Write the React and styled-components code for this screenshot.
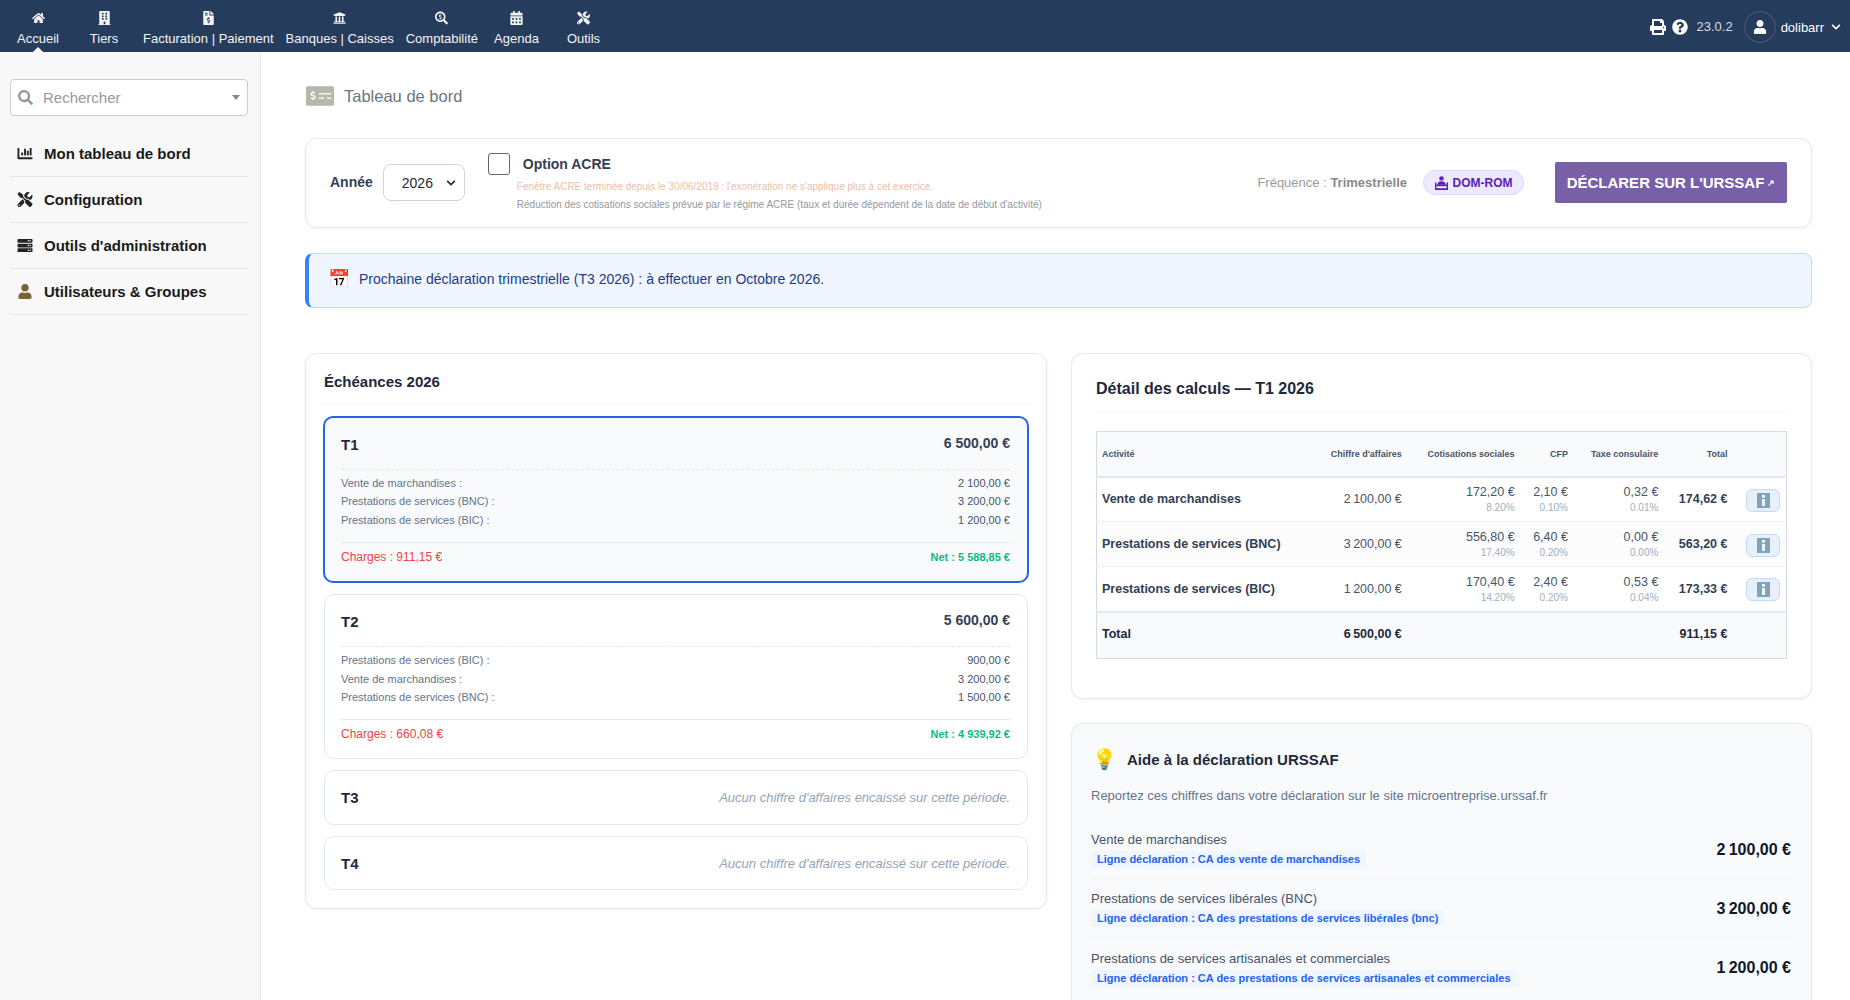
import React from "react";
import styled, { createGlobalStyle } from "styled-components";
import {
  FaHome, FaBuilding, FaFileInvoiceDollar, FaUniversity, FaSearchDollar, FaCalendarAlt, FaTools,
  FaChartBar, FaServer, FaUser, FaPrint, FaQuestionCircle, FaSearch, FaMoneyCheckAlt, FaChevronDown,
} from "react-icons/fa";

const Global = createGlobalStyle`
  html, body { margin: 0; padding: 0; height: 1000px; overflow: hidden; background: #fff; }
  body { font-family: "Liberation Sans", Arial, sans-serif; color: #1e293b; }
  * { box-sizing: border-box; }
`;

const TopBar = styled.header`
  height: 52px;
  background: #263c5c;
  color: #fff;
  display: flex;
  align-items: stretch;
  justify-content: space-between;
  padding: 0 9px 0 5px;
`;
const NavList = styled.nav`
  display: flex;
`;
const NavItem = styled.div`
  position: relative;
  display: flex;
  flex-direction: column;
  align-items: center;
  padding: 11px 6px 0;
  min-width: ${(p) => p.$min || 0}px;
  font-size: 13px;
  color: #f4f4f4;
  svg { font-size: 13px; height: 14px; margin-bottom: 6px; }
  ${(p) => p.$active && `
    &::after {
      content: "";
      position: absolute;
      left: 50%;
      bottom: 0;
      margin-left: -5px;
      border: 5px solid transparent;
      border-top: 0;
      border-bottom-color: #fff;
    }
  `}
`;
const TopRight = styled.div`
  display: flex;
  align-items: center;
  font-size: 13px;
  padding-top: 2px;
`;
const Version = styled.span`
  font-size: 13px;
  color: #d6dce5;
  margin: 0 11px 2px 8px;
`;
const Avatar = styled.span`
  width: 32px;
  height: 32px;
  border-radius: 50%;
  border: 1px solid #4a5d78;
  display: inline-flex;
  align-items: center;
  justify-content: center;
  font-size: 14px;
  margin-right: 5px;
`;

const Body = styled.div`
  display: flex;
  height: 948px;
  overflow: hidden;
`;
const Side = styled.aside`
  width: 261px;
  flex: none;
  background: #f8f8f8;
  border-right: 1px solid #eaeaea;
  padding: 27px 12px 0 10px;
`;
const SearchBox = styled.div`
  height: 37px;
  border: 1px solid #ccc;
  border-radius: 4px;
  background: #fff;
  display: flex;
  align-items: center;
  padding: 0 6px 0 7px;
  font-size: 15px;
  color: #999;
  margin-bottom: 15px;
  svg { color: #999; font-size: 15px; margin-right: 10px; }
  span { flex: 1; }
  &::after {
    content: "";
    border: 4px solid transparent;
    border-top: 5px solid #888;
    border-bottom: 0;
    margin-right: 1px;
  }
`;
const SideItem = styled.div`
  height: 46px;
  border-bottom: 1px solid #e6e6e6;
  display: flex;
  align-items: center;
  font-weight: 700;
  font-size: 15px;
  color: #1a1a1a;
  svg { width: 16px; margin: 0 11px 0 7px; color: ${(p) => p.$color || "#222"}; font-size: 15px; }
`;

const Main = styled.main`
  flex: 1;
  padding: 26px 38px 0 44px;
  min-width: 0;
`;
const PageTitle = styled.div`
  display: flex;
  align-items: center;
  height: 36px;
  padding-left: 1px;
  font-size: 16.5px;
  color: #6c757d;
  margin-bottom: 24px;
  svg { font-size: 28px; color: #b5b8aa; margin-right: 10px; }
`;
const Panel = styled.section`
  background: ${(p) => p.$bg || "#fff"};
  border: 1px solid #e4e9f2;
  border-radius: 12px;
  box-shadow: 0 1px 3px rgba(15, 23, 42, 0.06);
`;
const Toolbar = styled(Panel)`
  height: 90px;
  display: flex;
  align-items: center;
  padding: 0 24px 1px;
  margin-bottom: 25px;
`;
const YearLabel = styled.label`
  font-weight: 700;
  font-size: 14px;
  color: #334155;
  margin-right: 10px;
  margin-bottom: 2px;
`;
const YearSelect = styled.div`
  width: 82px;
  height: 37px;
  border: 1px solid #cbd5e1;
  border-radius: 8px;
  font-size: 14px;
  display: flex;
  align-items: center;
  justify-content: space-between;
  padding: 0 8px 0 18px;
  svg { font-size: 10px; }
`;
const Acre = styled.div`
  margin-left: 23px;
  align-self: flex-start;
  padding-top: 14px;
`;
const AcreHead = styled.div`
  display: flex;
  align-items: center;
  font-size: 14px;
  font-weight: 700;
  color: #334155;
  margin-bottom: 3px;
`;
const CheckBox = styled.span`
  width: 22px;
  height: 22px;
  border: 1px solid #666;
  border-radius: 3px;
  margin-right: 13px;
`;
const AcreNote = styled.div`
  font-size: 10px;
  color: ${(p) => p.$color};
  margin-left: 29px;
  line-height: 18px;
`;
const Freq = styled.div`
  margin-left: auto;
  margin-bottom: 1px;
  font-size: 13px;
  color: #9b9b9b;
  b { color: #8a8a8a; }
`;
const Badge = styled.span`
  display: inline-flex;
  align-items: center;
  gap: 5px;
  width: 101px;
  height: 25px;
  justify-content: center;
  margin: 0 31px 0 16px;
  background: #ede9fe;
  border: 1px solid #ddd6fe;
  border-radius: 13px;
  color: #5b21b6;
  font-size: 12px;
  font-weight: 700;
`;
const DeclareBtn = styled.div`
  width: 232px;
  height: 41px;
  background: #7860a8;
  border-radius: 2px;
  color: #fff;
  font-weight: 700;
  font-size: 15px;
  display: flex;
  align-items: center;
  justify-content: center;
  white-space: nowrap;
  small { font-size: 9px; margin-left: 3px; }
`;
const Notice = styled.div`
  height: 55px;
  background: #eff6ff;
  border: 1px solid #bfdbfe;
  border-left: 4px solid #3b82f6;
  border-radius: 8px;
  display: flex;
  align-items: center;
  padding: 0 0 3px 19px;
  font-size: 14px;
  color: #1e3a8a;
  margin-bottom: 45px;
  span:first-child { font-size: 18px; margin-right: 9px; }
`;
const Columns = styled.div`
  display: flex;
  gap: 24px;
  align-items: flex-start;
`;
const LeftCol = styled.div`
  width: 742px;
  flex: none;
`;
const RightCol = styled.div`
  flex: 1;
  min-width: 0;
`;
const EchPanel = styled(Panel)`
  padding: 19px 18px 18px;
`;
const EchTitle = styled.h3`
  margin: 0;
  padding-bottom: 14px;
  border-bottom: 1px solid #f1f5f9;
  font-size: 15px;
  color: #1e293b;
`;
const Quarter = styled.div`
  border: ${(p) => (p.$active ? "2px solid #2563eb" : "1px solid #e2e8f0")};
  background: ${(p) => (p.$active ? "#f8fafc" : "#fff")};
  border-radius: 10px;
  padding: ${(p) => (p.$empty ? "16px 17px 15.5px 16px" : "16px 17px 16px 16px")};
  margin: ${(p) => (p.$active ? "11px -1px 0" : "11px 0 0")};
`;
const QHead = styled.div`
  display: flex;
  justify-content: space-between;
  align-items: center;
  height: 21px;
`;
const QName = styled.div`
  font-weight: 700;
  font-size: 15px;
  line-height: 20px;
  margin-top: 1px;
`;
const QTotal = styled.div`
  font-weight: 700;
  font-size: 14px;
  color: #334155;
  margin-bottom: 3px;
`;
const QEmpty = styled.div`
  font-style: italic;
  font-size: 13px;
  color: #94a3b8;
`;
const QLines = styled.div`
  border-top: 1px dashed #e2e8f0;
  margin-top: 14px;
  padding: 4px 0 13px;
`;
const QLine = styled.div`
  display: flex;
  justify-content: space-between;
  font-size: 11px;
  line-height: 18.4px;
  color: #64748b;
  span:last-child { color: #475569; }
`;
const QFoot = styled.div`
  border-top: 1px solid #e2e8f0;
  padding-top: 6px;
  display: flex;
  justify-content: space-between;
  align-items: center;
  height: 16px;
  box-sizing: content-box;
`;
const Charges = styled.span`
  font-size: 12px;
  color: #ef4444;
`;
const Net = styled.span`
  font-size: 11px;
  font-weight: 700;
  color: #10b981;
`;

const DetailPanel = styled(Panel)`
  padding: 26px 24px 39px 24px;
  margin-bottom: 24px;
`;
const DetailTitle = styled.h3`
  margin: 0 0 18px;
  padding-bottom: 14px;
  border-bottom: 1px solid #f1f5f9;
  font-size: 16px;
  color: #1e293b;
`;
const Table = styled.table`
  width: 100%;
  border-collapse: collapse;
  border: 1px solid #d5d9e0;
  font-size: 12.5px;
  td, th { padding: 0 6px; text-align: right; }
  td:first-child, th:first-child { text-align: left; padding-left: 5px; }
`;
const HeadRow = styled.tr`
  height: 45px;
  background: #f8fafc;
  border-bottom: 2px solid #e2e8f0;
  th { font-size: 9px; color: #475569; font-weight: 700; }
`;
const Row = styled.tr`
  height: 45px;
  border-bottom: 1px solid #eef1f5;
  background: ${(p) => (p.$alt ? "#fcfcfd" : "#fff")};
  color: #475569;
  td:first-child { font-weight: 700; color: #334155; }
`;
const TotalCell = styled.td`
  font-weight: 700;
  color: #334155;
`;
const FootRow = styled.tr`
  height: 47px;
  background: #f8fafc;
  border-top: 2px solid #e2e8f0;
  td { font-weight: 700; color: #1e293b; padding-bottom: 2px; }
`;
const Pct = styled.div`
  font-size: 10px;
  color: #a0aec0;
  margin-top: 3px;
`;
const InfoBtn = styled.span`
  display: inline-flex;
  align-items: center;
  justify-content: center;
  width: 34px;
  height: 23px;
  margin-top: 2px;
  background: #e8f1fb;
  border: 1px solid #bfdbfe;
  border-radius: 6px;
`;

const HelpPanel = styled(Panel)`
  padding: 18px 20px 0 19px;
  height: 300px;
`;
const HelpHead = styled.div`
  display: flex;
  align-items: center;
  font-weight: 700;
  font-size: 15px;
  color: #1e293b;
  height: 34px;
  span { font-size: 20px; margin: 0 10px 0 1px; }
`;
const HelpText = styled.p`
  margin: 12px 0 18px;
  font-size: 13px;
  color: #64748b;
`;
const HelpRow = styled.div`
  display: flex;
  align-items: center;
  justify-content: space-between;
  height: 59px;
  border-bottom: 1px solid #f1f5f9;
  &:last-child { border-bottom: 0; }
`;
const HelpLabel = styled.div`
  font-size: 13px;
  color: #475569;
  margin-bottom: 2px;
`;
const HelpTag = styled.span`
  display: inline-block;
  background: #eff6ff;
  color: #2563eb;
  font-weight: 700;
  font-size: 11px;
  padding: 2px 6px 3px;
  border-radius: 3px;
`;
const HelpAmount = styled.div`
  font-weight: 700;
  font-size: 16px;
  color: #0f172a;
  margin-bottom: 1px;
`;

function TrayIcon() {
  return (
    <svg width="13" height="14" viewBox="0 0 13 14" fill="currentColor" aria-hidden="true">
      <circle cx="6.5" cy="2.4" r="2.2" />
      <path d="M2.5 8.2c0-2 1.8-3 4-3s4 1 4 3H2.5z" />
      <path d="M0 6.5h1.4v5.8h10.2V6.5H13V14H0z" />
      <rect x="1.4" y="8.2" width="10.2" height="2" />
    </svg>
  );
}

function InfoIcon() {
  return (
    <svg width="13" height="15" viewBox="0 0 13 15" aria-hidden="true">
      <rect width="13" height="15" fill="#7ea5b8" />
      <rect x="5" y="2" width="3" height="2.6" fill="#fff" />
      <rect x="5" y="6" width="3" height="7" fill="#eef5f8" />
    </svg>
  );
}

const nav = [
  ["Accueil", FaHome, 66, true],
  ["Tiers", FaBuilding, 66],
  ["Facturation | Paiement", FaFileInvoiceDollar],
  ["Banques | Caisses", FaUniversity],
  ["Comptabilité", FaSearchDollar],
  ["Agenda", FaCalendarAlt, 65],
  ["Outils", FaTools, 69],
];
const side = [
  ["Mon tableau de bord", FaChartBar],
  ["Configuration", FaTools],
  ["Outils d'administration", FaServer],
  ["Utilisateurs & Groupes", FaUser, "#7a6233"],
];
const details = [
  ["Vente de marchandises", "2\u202f100,00 €", "172,20 €", "8.20%", "2,10 €", "0.10%", "0,32 €", "0.01%", "174,62 €"],
  ["Prestations de services (BNC)", "3\u202f200,00 €", "556,80 €", "17.40%", "6,40 €", "0.20%", "0,00 €", "0.00%", "563,20 €"],
  ["Prestations de services (BIC)", "1\u202f200,00 €", "170,40 €", "14.20%", "2,40 €", "0.20%", "0,53 €", "0.04%", "173,33 €"],
];
const help = [
  ["Vente de marchandises", "CA des vente de marchandises", "2\u202f100,00 €"],
  ["Prestations de services libérales (BNC)", "CA des prestations de services libérales (bnc)", "3\u202f200,00 €"],
  ["Prestations de services artisanales et commerciales", "CA des prestations de services artisanales et commerciales", "1\u202f200,00 €"],
];

function QuarterCard({ name, total, lines, charges, net, active }) {
  return (
    <Quarter $active={active}>
      <QHead>
        <QName>{name}</QName>
        <QTotal>{total}</QTotal>
      </QHead>
      <QLines>
        {lines.map(([l, v]) => (
          <QLine key={l}><span>{l} :</span><span>{v}</span></QLine>
        ))}
      </QLines>
      <QFoot>
        <Charges>Charges : {charges}</Charges>
        <Net>Net : {net}</Net>
      </QFoot>
    </Quarter>
  );
}

export default function App() {
  return (
    <>
      <Global />
      <TopBar>
        <NavList>
          {nav.map(([label, Icon, min, active]) => (
            <NavItem key={label} $min={min} $active={active}><Icon />{label}</NavItem>
          ))}
        </NavList>
        <TopRight>
          <FaPrint size={16} style={{ marginRight: 6 }} />
          <FaQuestionCircle size={16} />
          <Version>23.0.2</Version>
          <Avatar><FaUser /></Avatar>
          dolibarr
          <FaChevronDown size={10} style={{ marginLeft: 7 }} />
        </TopRight>
      </TopBar>
      <Body>
        <Side>
          <SearchBox><FaSearch /><span>Rechercher</span></SearchBox>
          {side.map(([label, Icon, color]) => (
            <SideItem key={label} $color={color}><Icon />{label}</SideItem>
          ))}
        </Side>
        <Main>
          <PageTitle><FaMoneyCheckAlt />Tableau de bord</PageTitle>
          <Toolbar>
            <YearLabel>Année</YearLabel>
            <YearSelect>2026<FaChevronDown /></YearSelect>
            <Acre>
              <AcreHead><CheckBox />Option ACRE</AcreHead>
              <AcreNote $color="#eabfa6">Fenêtre ACRE terminée depuis le 30/06/2019 : l'exonération ne s'applique plus à cet exercice.</AcreNote>
              <AcreNote $color="#94989e">Réduction des cotisations sociales prévue par le régime ACRE (taux et durée dépendent de la date de début d'activité)</AcreNote>
            </Acre>
            <Freq>Fréquence : <b>Trimestrielle</b></Freq>
            <Badge><TrayIcon />DOM-ROM</Badge>
            <DeclareBtn>DÉCLARER SUR L'URSSAF<small>↗</small></DeclareBtn>
          </Toolbar>
          <Notice><span>📅</span><span>Prochaine déclaration trimestrielle (T3 2026) : à effectuer en Octobre 2026.</span></Notice>
          <Columns>
            <LeftCol>
              <EchPanel>
                <EchTitle>Échéances 2026</EchTitle>
                <QuarterCard
                  active
                  name="T1"
                  total="6 500,00 €"
                  lines={[["Vente de marchandises", "2 100,00 €"], ["Prestations de services (BNC)", "3 200,00 €"], ["Prestations de services (BIC)", "1 200,00 €"]]}
                  charges="911,15 €"
                  net="5 588,85 €"
                />
                <QuarterCard
                  name="T2"
                  total="5 600,00 €"
                  lines={[["Prestations de services (BIC)", "900,00 €"], ["Vente de marchandises", "3 200,00 €"], ["Prestations de services (BNC)", "1 500,00 €"]]}
                  charges="660,08 €"
                  net="4 939,92 €"
                />
                <Quarter $empty>
                  <QHead><QName>T3</QName><QEmpty>Aucun chiffre d'affaires encaissé sur cette période.</QEmpty></QHead>
                </Quarter>
                <Quarter $empty>
                  <QHead><QName>T4</QName><QEmpty>Aucun chiffre d'affaires encaissé sur cette période.</QEmpty></QHead>
                </Quarter>
              </EchPanel>
            </LeftCol>
            <RightCol>
              <DetailPanel>
                <DetailTitle>Détail des calculs — T1 2026</DetailTitle>
                <Table>
                  <thead>
                    <HeadRow>
                      <th>Activité</th><th>Chiffre d'affaires</th><th>Cotisations sociales</th><th>CFP</th><th>Taxe consulaire</th><th>Total</th><th />
                    </HeadRow>
                  </thead>
                  <tbody>
                    {details.map((d, i) => (
                      <Row key={d[0]} $alt={i === 1}>
                        <td>{d[0]}</td>
                        <td>{d[1]}</td>
                        <td>{d[2]}<Pct>{d[3]}</Pct></td>
                        <td>{d[4]}<Pct>{d[5]}</Pct></td>
                        <td>{d[6]}<Pct>{d[7]}</Pct></td>
                        <TotalCell>{d[8]}</TotalCell>
                        <td><InfoBtn><InfoIcon /></InfoBtn></td>
                      </Row>
                    ))}
                    <FootRow>
                      <td>Total</td><td>6{"\u202f"}500,00 €</td><td /><td /><td /><td>911,15 €</td><td />
                    </FootRow>
                  </tbody>
                </Table>
              </DetailPanel>
              <HelpPanel $bg="#f8fafc">
                <HelpHead><span>💡</span>Aide à la déclaration URSSAF</HelpHead>
                <HelpText>Reportez ces chiffres dans votre déclaration sur le site microentreprise.urssaf.fr</HelpText>
                {help.map(([label, tag, amount]) => (
                  <HelpRow key={label}>
                    <div>
                      <HelpLabel>{label}</HelpLabel>
                      <HelpTag>Ligne déclaration : {tag}</HelpTag>
                    </div>
                    <HelpAmount>{amount}</HelpAmount>
                  </HelpRow>
                ))}
              </HelpPanel>
            </RightCol>
          </Columns>
        </Main>
      </Body>
    </>
  );
}
